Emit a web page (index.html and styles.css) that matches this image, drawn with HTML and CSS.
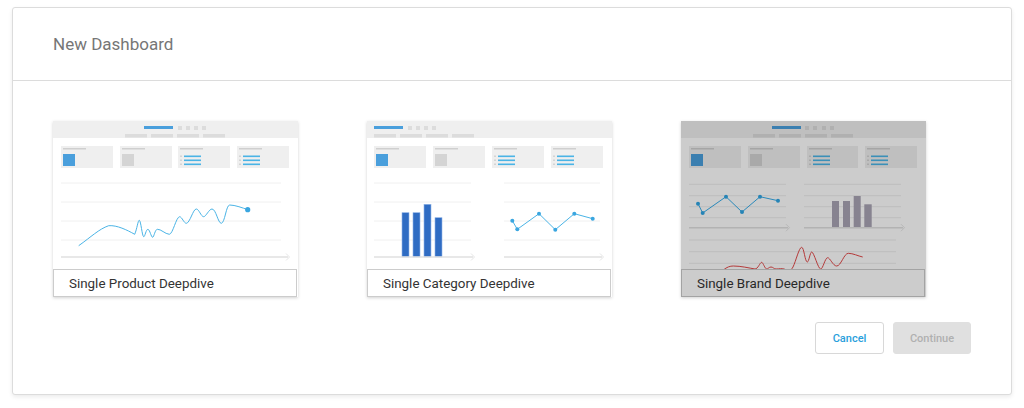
FILE: index.html
```html
<!DOCTYPE html>
<html>
<head>
<meta charset="utf-8">
<link rel="stylesheet" href="styles.css">
</head>
<body>
<div class="dialog">
  <div class="dialog-header">New Dashboard</div>
  <div class="dialog-body">
    <div class="cards">
      <div class="card">
        <svg class="preview" viewBox="0 0 245 148" width="245" height="148">
          <rect x="0" y="0" width="245" height="17" fill="#efefef"/>
          <rect x="91" y="5" width="29" height="3" fill="#4a9fdc"/>
          <rect x="125" y="5" width="4" height="4" fill="#dcdcdc"/>
          <rect x="133" y="5" width="4" height="4" fill="#dcdcdc"/>
          <rect x="141" y="5" width="4" height="4" fill="#dcdcdc"/>
          <rect x="149" y="5" width="4" height="4" fill="#dcdcdc"/>
          <rect x="72" y="13" width="22" height="3.5" fill="#dcdcdc"/>
          <rect x="98" y="13" width="22" height="3.5" fill="#dcdcdc"/>
          <rect x="124" y="13" width="22" height="3.5" fill="#dcdcdc"/>
          <rect x="150" y="13" width="22" height="3.5" fill="#dcdcdc"/>
          <g>
            <rect x="8" y="25" width="52" height="22" fill="#efefef"/>
            <rect x="10" y="27" width="23" height="1.5" fill="#cfcfcf"/>
            <rect x="10" y="33" width="12" height="12" fill="#4a9fdc"/>
            <rect x="67" y="25" width="52" height="22" fill="#efefef"/>
            <rect x="69" y="27" width="23" height="1.5" fill="#cfcfcf"/>
            <rect x="69" y="33" width="12" height="12" fill="#d4d4d4"/>
            <rect x="125" y="25" width="52" height="22" fill="#efefef"/>
            <rect x="127" y="27" width="23" height="1.5" fill="#cfcfcf"/>
            <rect x="127" y="34.5" width="2" height="1.5" fill="#d4d4d4"/>
            <rect x="127" y="38.5" width="2" height="1.5" fill="#d4d4d4"/>
            <rect x="127" y="42.5" width="2" height="1.5" fill="#d4d4d4"/>
            <rect x="131" y="34.5" width="17" height="1.6" fill="#4ab4e6"/>
            <rect x="131" y="38.5" width="17" height="1.6" fill="#4ab4e6"/>
            <rect x="131" y="42.5" width="17" height="1.6" fill="#4ab4e6"/>
            <rect x="184" y="25" width="52" height="22" fill="#efefef"/>
            <rect x="186" y="27" width="23" height="1.5" fill="#cfcfcf"/>
            <rect x="186" y="34.5" width="2" height="1.5" fill="#d4d4d4"/>
            <rect x="186" y="38.5" width="2" height="1.5" fill="#d4d4d4"/>
            <rect x="186" y="42.5" width="2" height="1.5" fill="#d4d4d4"/>
            <rect x="190" y="34.5" width="17" height="1.6" fill="#4ab4e6"/>
            <rect x="190" y="38.5" width="17" height="1.6" fill="#4ab4e6"/>
            <rect x="190" y="42.5" width="17" height="1.6" fill="#4ab4e6"/>
          </g>
          <g stroke="#f0f0f0" stroke-width="1">
            <line x1="8" y1="62" x2="228" y2="62"/>
            <line x1="8" y1="81" x2="228" y2="81"/>
            <line x1="8" y1="100" x2="228" y2="100"/>
            <line x1="8" y1="119" x2="228" y2="119"/>
          </g>
          <line x1="8" y1="136" x2="235" y2="136" stroke="#e0e0e0" stroke-width="1.5"/>
          <polyline points="233,132.5 236.5,136 233,139.5" fill="none" stroke="#dedede" stroke-width="0.8"/>
          <path d="M25.7,124.7 C38,116 46,108 55.7,104.7 C64,104 74,109 81.7,113.3 C84,108 85,99 86.3,99.3 C88,100 89,115 90.7,115.7 C92,116 93,108 95,108.3 C97,109 98,116 99.7,116.3 C101,116 102,108.5 104.3,108.3 C108,108 112,113 116.3,113.3 C120,113 123,96 126.7,95.7 C129,96 131,102.3 133.3,102.3 C137,102 140,88 143.3,88 C146,88 148,95.7 150.7,95.7 C153,95.7 156,88 159,88 C163,88 165,102.3 168.3,102.3 C172,102 173,84 176.7,84 C182,84 190,87 194.7,88.7" fill="none" stroke="#4ab4e6" stroke-width="1"/>
          <circle cx="194.7" cy="88.7" r="2.6" fill="#3aa6e0"/>
        </svg>
        <div class="card-label">Single Product Deepdive</div>
      </div>

      <div class="card">
        <svg class="preview" viewBox="0 0 245 148" width="245" height="148">
          <rect x="0" y="0" width="245" height="17" fill="#efefef"/>
          <rect x="7" y="5" width="29" height="3" fill="#4a9fdc"/>
          <rect x="41" y="5" width="4" height="4" fill="#dcdcdc"/>
          <rect x="49" y="5" width="4" height="4" fill="#dcdcdc"/>
          <rect x="57" y="5" width="4" height="4" fill="#dcdcdc"/>
          <rect x="65" y="5" width="4" height="4" fill="#dcdcdc"/>
          <rect x="7" y="13" width="22" height="3.5" fill="#dcdcdc"/>
          <rect x="33" y="13" width="22" height="3.5" fill="#dcdcdc"/>
          <rect x="59" y="13" width="22" height="3.5" fill="#dcdcdc"/>
          <rect x="85" y="13" width="22" height="3.5" fill="#dcdcdc"/>
          <g>
            <rect x="7" y="25" width="52" height="22" fill="#efefef"/>
            <rect x="9" y="27" width="23" height="1.5" fill="#cfcfcf"/>
            <rect x="9" y="33" width="12" height="12" fill="#4a9fdc"/>
            <rect x="66" y="25" width="52" height="22" fill="#efefef"/>
            <rect x="68" y="27" width="23" height="1.5" fill="#cfcfcf"/>
            <rect x="68" y="33" width="12" height="12" fill="#d4d4d4"/>
            <rect x="125" y="25" width="52" height="22" fill="#efefef"/>
            <rect x="127" y="27" width="23" height="1.5" fill="#cfcfcf"/>
            <rect x="127" y="34.5" width="2" height="1.5" fill="#d4d4d4"/>
            <rect x="127" y="38.5" width="2" height="1.5" fill="#d4d4d4"/>
            <rect x="127" y="42.5" width="2" height="1.5" fill="#d4d4d4"/>
            <rect x="131" y="34.5" width="17" height="1.6" fill="#4ab4e6"/>
            <rect x="131" y="38.5" width="17" height="1.6" fill="#4ab4e6"/>
            <rect x="131" y="42.5" width="17" height="1.6" fill="#4ab4e6"/>
            <rect x="184" y="25" width="52" height="22" fill="#efefef"/>
            <rect x="186" y="27" width="23" height="1.5" fill="#cfcfcf"/>
            <rect x="186" y="34.5" width="2" height="1.5" fill="#d4d4d4"/>
            <rect x="186" y="38.5" width="2" height="1.5" fill="#d4d4d4"/>
            <rect x="186" y="42.5" width="2" height="1.5" fill="#d4d4d4"/>
            <rect x="190" y="34.5" width="17" height="1.6" fill="#4ab4e6"/>
            <rect x="190" y="38.5" width="17" height="1.6" fill="#4ab4e6"/>
            <rect x="190" y="42.5" width="17" height="1.6" fill="#4ab4e6"/>
          </g>
          <g stroke="#f0f0f0" stroke-width="1">
            <line x1="7" y1="62" x2="104" y2="62"/>
            <line x1="7" y1="81" x2="104" y2="81"/>
            <line x1="7" y1="100" x2="104" y2="100"/>
            <line x1="7" y1="119" x2="104" y2="119"/>
            <line x1="137" y1="62" x2="233" y2="62"/>
            <line x1="137" y1="81" x2="233" y2="81"/>
            <line x1="137" y1="100" x2="233" y2="100"/>
            <line x1="137" y1="119" x2="233" y2="119"/>
          </g>
          <g fill="#2f6cc3" stroke="#8fb4e6" stroke-width="0.6">
            <rect x="35" y="91.7" width="7" height="44.3"/>
            <rect x="46" y="91.7" width="7" height="44.3"/>
            <rect x="57" y="83.3" width="7" height="52.7"/>
            <rect x="68" y="96.7" width="7" height="39.3"/>
          </g>
          <line x1="7" y1="136" x2="106" y2="136" stroke="#e0e0e0" stroke-width="1.5"/>
          <polyline points="104,132.5 107.5,136 104,139.5" fill="none" stroke="#dedede" stroke-width="0.8"/>
          <line x1="137" y1="136" x2="235" y2="136" stroke="#e0e0e0" stroke-width="1.5"/>
          <polyline points="233,132.5 236.5,136 233,139.5" fill="none" stroke="#dedede" stroke-width="0.8"/>
          <polyline points="145.3,99.7 150.3,108.3 172,92.7 188.3,108.7 207.3,92.7 225.7,97.7" fill="none" stroke="#4ab4e6" stroke-width="1"/>
          <g fill="#3aa6e0">
            <circle cx="145.3" cy="99.7" r="2"/>
            <circle cx="150.3" cy="108.3" r="2"/>
            <circle cx="172" cy="92.7" r="2"/>
            <circle cx="188.3" cy="108.7" r="2"/>
            <circle cx="207.3" cy="92.7" r="2"/>
            <circle cx="225.7" cy="97.7" r="2"/>
          </g>
        </svg>
        <div class="card-label">Single Category Deepdive</div>
      </div>

      <div class="card selected">
        <svg class="preview" viewBox="0 0 245 148" width="245" height="148">
          <rect x="0" y="0" width="245" height="17" fill="#efefef"/>
          <rect x="91" y="5" width="29" height="3" fill="#4a9fdc"/>
          <rect x="124" y="5" width="4" height="4" fill="#dcdcdc"/>
          <rect x="132" y="5" width="4" height="4" fill="#dcdcdc"/>
          <rect x="141" y="5" width="4" height="4" fill="#dcdcdc"/>
          <rect x="149" y="5" width="4" height="4" fill="#dcdcdc"/>
          <rect x="72" y="13" width="22" height="3.5" fill="#dcdcdc"/>
          <rect x="98" y="13" width="22" height="3.5" fill="#dcdcdc"/>
          <rect x="124" y="13" width="22" height="3.5" fill="#dcdcdc"/>
          <rect x="150" y="13" width="22" height="3.5" fill="#dcdcdc"/>
          <g>
            <rect x="8" y="25" width="52" height="22" fill="#efefef"/>
            <rect x="10" y="27" width="23" height="1.5" fill="#cfcfcf"/>
            <rect x="10" y="33" width="12" height="12" fill="#4a9fdc"/>
            <rect x="67" y="25" width="52" height="22" fill="#efefef"/>
            <rect x="69" y="27" width="23" height="1.5" fill="#cfcfcf"/>
            <rect x="69" y="33" width="12" height="12" fill="#d4d4d4"/>
            <rect x="126" y="25" width="51" height="22" fill="#efefef"/>
            <rect x="128" y="27" width="23" height="1.5" fill="#cfcfcf"/>
            <rect x="128" y="34.5" width="2" height="1.5" fill="#d4d4d4"/>
            <rect x="128" y="38.5" width="2" height="1.5" fill="#d4d4d4"/>
            <rect x="128" y="42.5" width="2" height="1.5" fill="#d4d4d4"/>
            <rect x="132" y="34.5" width="17" height="1.6" fill="#4ab4e6"/>
            <rect x="132" y="38.5" width="17" height="1.6" fill="#4ab4e6"/>
            <rect x="132" y="42.5" width="17" height="1.6" fill="#4ab4e6"/>
            <rect x="184" y="25" width="52" height="22" fill="#efefef"/>
            <rect x="186" y="27" width="23" height="1.5" fill="#cfcfcf"/>
            <rect x="186" y="34.5" width="2" height="1.5" fill="#d4d4d4"/>
            <rect x="186" y="38.5" width="2" height="1.5" fill="#d4d4d4"/>
            <rect x="186" y="42.5" width="2" height="1.5" fill="#d4d4d4"/>
            <rect x="190" y="34.5" width="17" height="1.6" fill="#4ab4e6"/>
            <rect x="190" y="38.5" width="17" height="1.6" fill="#4ab4e6"/>
            <rect x="190" y="42.5" width="17" height="1.6" fill="#4ab4e6"/>
          </g>
          <g stroke="#ededed" stroke-width="1">
            <line x1="8" y1="63.3" x2="105" y2="63.3"/>
            <line x1="8" y1="74.7" x2="105" y2="74.7"/>
            <line x1="8" y1="85.7" x2="105" y2="85.7"/>
            <line x1="8" y1="96.7" x2="105" y2="96.7"/>
            <line x1="123" y1="63.3" x2="220" y2="63.3"/>
            <line x1="123" y1="74.7" x2="220" y2="74.7"/>
            <line x1="123" y1="85.7" x2="220" y2="85.7"/>
            <line x1="123" y1="96.7" x2="220" y2="96.7"/>
            <line x1="8" y1="119" x2="215" y2="119"/>
            <line x1="8" y1="130.7" x2="215" y2="130.7"/>
            <line x1="8" y1="142.3" x2="215" y2="142.3"/>
          </g>
          <g fill="#a9a4b4">
            <rect x="151" y="80" width="7" height="26.7"/>
            <rect x="162" y="80" width="7" height="26.7"/>
            <rect x="172.7" y="75" width="7" height="31.7"/>
            <rect x="183.3" y="83.3" width="7.4" height="23.4"/>
          </g>
          <line x1="8" y1="106.7" x2="107" y2="106.7" stroke="#e0e0e0" stroke-width="1.5"/>
          <polyline points="105,103.2 108.5,106.7 105,110.2" fill="none" stroke="#dedede" stroke-width="0.8"/>
          <line x1="123" y1="106.7" x2="222" y2="106.7" stroke="#e0e0e0" stroke-width="1.5"/>
          <polyline points="220,103.2 223.5,106.7 220,110.2" fill="none" stroke="#dedede" stroke-width="0.8"/>
          <polyline points="17,82.7 21.7,92 45,75.7 61,91 79,75.7 97,79.7" fill="none" stroke="#35acea" stroke-width="1"/>
          <g fill="#30a6e4">
            <circle cx="17" cy="82.7" r="2"/>
            <circle cx="21.7" cy="92" r="2"/>
            <circle cx="45" cy="75.7" r="2"/>
            <circle cx="61" cy="91" r="2"/>
            <circle cx="79" cy="75.7" r="2"/>
            <circle cx="97" cy="79.7" r="2"/>
          </g>
          <path d="M42.3,149 C46,146 49,145 52.3,145 C60,145 68,147 74,148 C77,148 79,141.3 80.7,141.3 C82,141.3 84,148 85.7,148 C87,148 88,146 90,146 C92,146 93,148 95,148 C98,148 101,147 104,148.3 C107,150 110,150 112,146 C115,140 118,126.3 120.7,126.3 C123,126.3 124,141 126.3,141 C128,141 129,131 130.7,131 C133,131 137,148 139.7,148 C142,148 144,136.7 146.7,136.7 C149,136.7 152,145 155.7,145 C160,145 163,132.3 167.3,132.3 C172,132.3 177,135 181.7,136" fill="none" stroke="#e24848" stroke-width="1"/>
        </svg>
        <div class="card-label">Single Brand Deepdive</div>
      </div>
    </div>
    <div class="actions">
      <button class="btn btn-cancel">Cancel</button>
      <button class="btn btn-continue" disabled>Continue</button>
    </div>
  </div>
</div>
</body>
</html>
```

FILE: styles.css
```css
html, body {
  margin: 0;
  padding: 0;
  background: #ffffff;
}

body {
  font-family: Roboto, "Liberation Sans", Arial, sans-serif;
  padding: 7px 12px;
}

.dialog {
  width: 1000px;
  height: 388px;
  box-sizing: border-box;
  border: 1px solid #dcdcdc;
  border-radius: 3px;
  background: #ffffff;
  box-shadow: 0 2px 4px rgba(0, 0, 0, 0.08);
  display: flex;
  flex-direction: column;
}

.dialog-header {
  height: 73px;
  box-sizing: border-box;
  border-bottom: 1px solid #dcdcdc;
  padding: 26px 0 0 40px;
  font-size: 17px;
  color: #767676;
  line-height: 20px;
}

.dialog-body {
  flex: 1;
  padding: 40px 40px 0 40px;
  display: flex;
  flex-direction: column;
}

.cards {
  display: flex;
  gap: 69px;
}

.card {
  position: relative;
  width: 245px;
  height: 176px;
  display: flex;
  flex-direction: column;
  box-shadow: 0 1px 3px rgba(0, 0, 0, 0.18);
  background: #ffffff;
}

.preview {
  display: block;
  width: 245px;
  height: 148px;
}

.card-label {
  position: relative;
  height: 28px;
  box-sizing: border-box;
  border: 1px solid #cccccc;
  background: #ffffff;
  font-size: 13.4px;
  color: #333333;
  line-height: 28px;
  padding-left: 15px;
  width: 244px;
}

.card.selected::after {
  content: "";
  position: absolute;
  inset: 0;
  background: rgba(0, 0, 0, 0.2);
}

.actions {
  display: flex;
  justify-content: flex-end;
  gap: 9px;
  margin-top: 25px;
}

.btn {
  height: 32px;
  box-sizing: border-box;
  border-radius: 3px;
  font-family: Roboto, "Liberation Sans", Arial, sans-serif;
  font-size: 11px;
  font-weight: 500;
  padding: 0;
}

.btn-cancel {
  width: 69px;
  background: #ffffff;
  border: 1px solid #d8d8d8;
  color: #2a9fdc;
}

.btn-continue {
  width: 78px;
  background: #e0e0e0;
  border: 1px solid #e0e0e0;
  color: #b0b0b0;
}
```
